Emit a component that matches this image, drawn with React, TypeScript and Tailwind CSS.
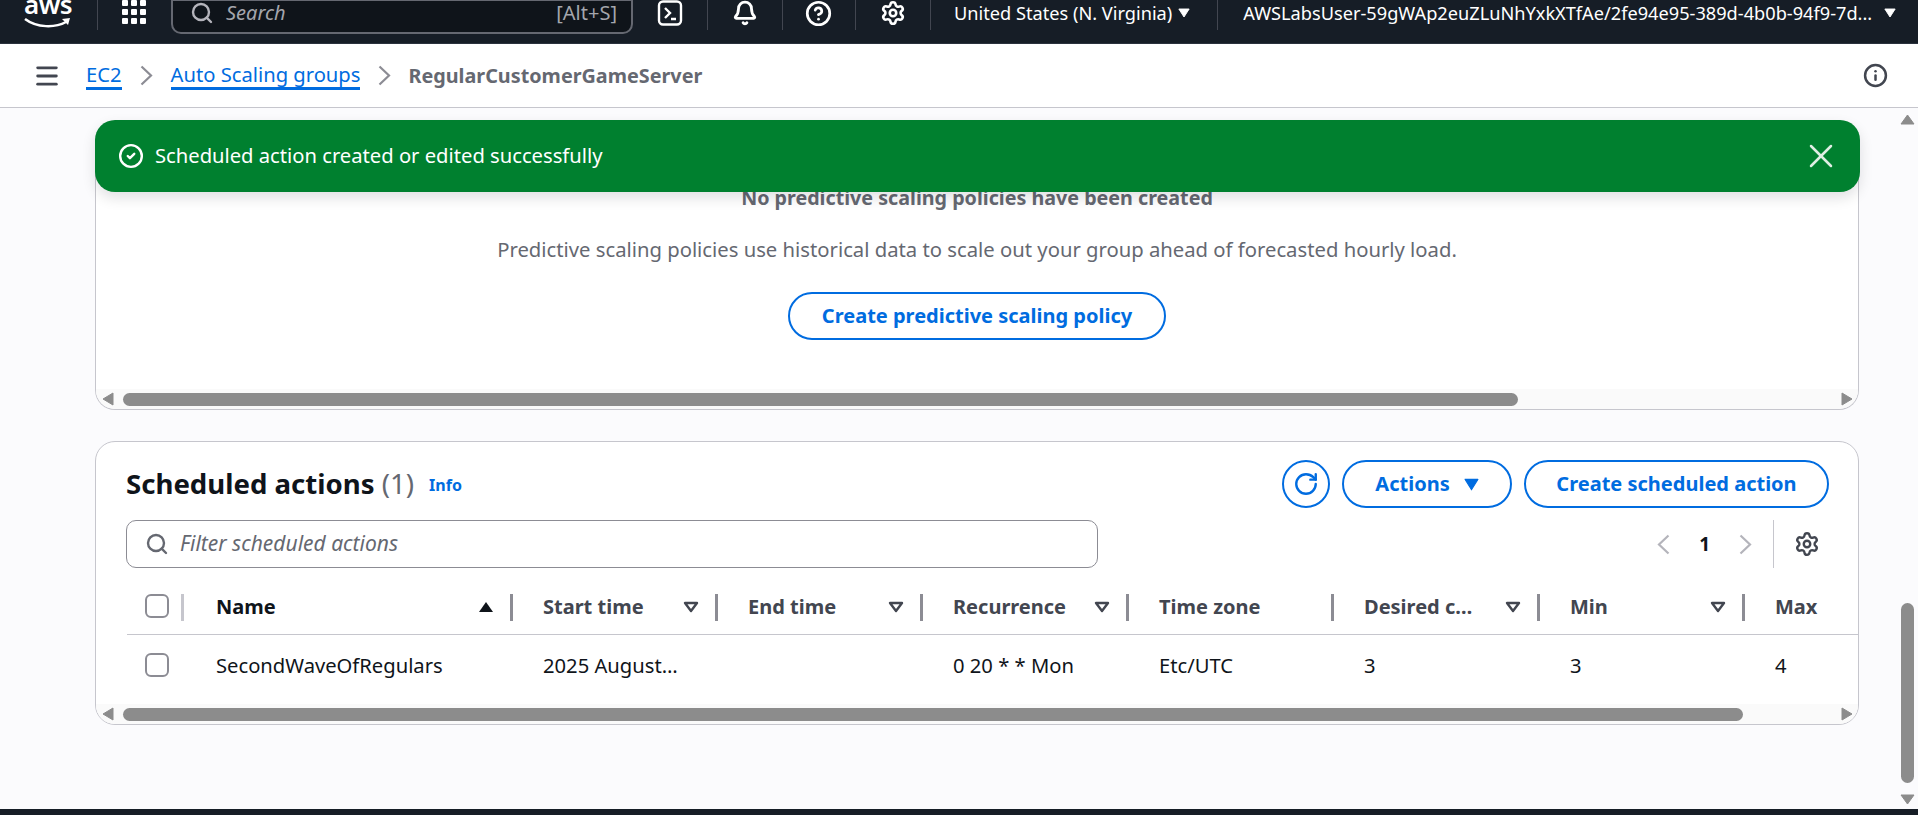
import { CircleCheck, Info, Menu, RotateCw, Search, Settings, Bell, CircleHelp, X } from 'lucide-react';

const font = { fontFamily: '"Noto Sans", sans-serif' };

const Divider = ({ className = '' }: { className?: string }) => (
  <div className={`w-px h-[30px] bg-[#424650] shrink-0 ${className}`} />
);

const Caret = ({ className = '', color = '#ffffff', width = 12, height = 10 }: { className?: string; color?: string; width?: number; height?: number }) => (
  <svg width={width} height={height} viewBox="0 0 14 10" preserveAspectRatio="none" className={className}>
    <path d="M1 1h12L7 9z" fill={color} stroke={color} strokeLinejoin="round" />
  </svg>
);

const ThinChevron = ({ left = false, color = '#8c8c94' }: { left?: boolean; color?: string }) => (
  <svg width="13" height="21" viewBox="0 0 13 21" fill="none" stroke={color} strokeWidth="2.2" className="shrink-0">
    <path d={left ? 'M11.500 1.500L2 10.500l9.500 9' : 'M1.500 1.500l9.500 9-9.500 9'} />
  </svg>
);

const TopBar = () => (
  <header className="h-[44px] shrink-0 bg-[#161d26] border-b border-[#2a323d] overflow-hidden flex items-start text-white">
    <div className="w-[97px] h-[30px] shrink-0 relative">
      <span className="absolute left-[24px] top-[-11px] text-[26px] leading-[30px] font-semibold tracking-[-0.5px]">aws</span>
      <svg width="48" height="12" viewBox="0 0 48 12" className="absolute left-[24px] top-[17px]">
        <path d="M1 2c12 9 30 9 41 3" fill="none" stroke="#fff" strokeWidth="2.5" />
        <path d="M38 2l8-1-2 7z" fill="#fff" />
      </svg>
    </div>
    <Divider />
    <svg width="24" height="24" viewBox="0 0 24 24" className="ml-[24px] shrink-0" fill="#fff">
      {[0, 9, 18].flatMap((y) =>
        [0, 9, 18].map((x) => <rect key={`${x}-${y}`} x={x} y={y} width="6" height="6" rx="1" />),
      )}
    </svg>
    <div className="ml-[25px] w-[462px] h-[35px] mt-[-1px] shrink-0 rounded-b-[10px] border-2 border-[#656871] bg-[#0f141a] flex items-center pl-[17px] pr-[14px] pb-[7px]">
      <Search size={24} strokeWidth={2.4} className="text-[#b4b4bb] shrink-0" />
      <span className="ml-[12px] italic text-[#a4a6ad] text-[20px]">Search</span>
      <span className="ml-auto text-[#a4a6ad] text-[20px]">[Alt+S]</span>
    </div>
    <svg width="26" height="26" viewBox="0 0 26 26" className="ml-[24px] shrink-0" fill="none" stroke="#fff" strokeWidth="2.4">
      <rect x="2" y="1.5" width="22" height="23" rx="4" />
      <path d="M8 8l5 5-5 5M14 19h5" />
    </svg>
    <Divider className="ml-[24px]" />
    <Bell size={26} strokeWidth={2.6} className="ml-[24px] shrink-0" />
    <Divider className="ml-[24px]" />
    <CircleHelp size={27} strokeWidth={2.4} className="ml-[22px] shrink-0" />
    <Divider className="ml-[23px]" />
    <Settings size={26} strokeWidth={2.4} className="ml-[24px] shrink-0" />
    <Divider className="ml-[24px]" />
    <span className="ml-[23px] text-[18.2px] leading-[26px] whitespace-nowrap">United States (N. Virginia)</span>
    <Caret className="ml-[6px] mt-[8px] shrink-0" />
    <Divider className="ml-[27px]" />
    <span className="ml-[25px] w-[632px] text-[18.2px] leading-[26px] whitespace-nowrap overflow-hidden">AWSLabsUser-59gWAp2euZLuNhYxkXTfAe/2fe94e95-389d-4b0b-94f9-7d...</span>
    <Caret className="ml-[9px] mt-[8px] shrink-0" />
  </header>
);

const Breadcrumbs = () => (
  <nav className="h-[64px] shrink-0 bg-white border-b border-[#c6c6cd] flex items-center pl-[33px] pr-[30px] text-[20.2px]">
    <Menu size={28} strokeWidth={2.4} className="text-[#424650] shrink-0" />
    <a className="ml-[25px] text-[#006ce0] border-b-[3px] border-[#006ce0] leading-[26px]">EC2</a>
    <span className="ml-[18px]"><ThinChevron /></span>
    <a className="ml-[18px] text-[#006ce0] border-b-[3px] border-[#006ce0] leading-[26px]">Auto Scaling groups</a>
    <span className="ml-[18px]"><ThinChevron /></span>
    <span className="ml-[17px] font-bold text-[#656871] text-[19.8px]">RegularCustomerGameServer</span>
    <Info size={25} strokeWidth={2.4} className="ml-auto text-[#424650]" />
  </nav>
);

const HScrollbar = ({ thumb }: { thumb: number }) => (
  <div className="h-[20px] bg-[#fafafa] flex items-center pl-[6px] pr-[5px] shrink-0">
    <svg width="12" height="14" viewBox="0 0 12 14" className="shrink-0"><path d="M11 1v12L1 7z" fill="#8c8c8c" stroke="#8c8c8c" strokeLinejoin="round" /></svg>
    <div className="flex-1 h-[13px] ml-[9px] mr-[10px]">
      <div className="h-full rounded-full bg-[#8c8c8c]" style={{ width: thumb }} />
    </div>
    <svg width="12" height="14" viewBox="0 0 12 14" className="shrink-0"><path d="M1 1v12l10-6z" fill="#8c8c8c" stroke="#8c8c8c" strokeLinejoin="round" /></svg>
  </div>
);

const Checkbox = () => <div className="w-[24px] h-[24px] rounded-[6px] border-2 border-[#8c8c94] bg-white" />;

const SortIcon = ({ active = false }: { active?: boolean }) =>
  active ? (
    <svg width="16" height="12" viewBox="0 0 16 12" className="shrink-0"><path d="M8 1l7 10H1z" fill="#0f141a" /></svg>
  ) : (
    <svg width="16" height="12" viewBox="0 0 16 12" className="shrink-0"><path d="M2 2h12l-6 8z" fill="none" stroke="#424650" strokeWidth="2.4" strokeLinejoin="round" /></svg>
  );

const columns = [
  { label: 'Start time', value: '2025 August…', sort: true },
  { label: 'End time', value: '', sort: true },
  { label: 'Recurrence', value: '0 20 * * Mon', sort: true },
  { label: 'Time zone', value: 'Etc/UTC', sort: false },
  { label: 'Desired c…', value: '3', sort: true },
  { label: 'Min', value: '3', sort: true },
];

const gridCols = 'grid grid-cols-[58px_328px_205px_205px_206px_205px_206px_205px_1fr]';

const ScheduledTable = () => (
  <div className="text-[20.2px]">
    <div className={`${gridCols} h-[49px] border-b border-[#c6c6cd] ml-[31px] text-[20px]`}>
      <div className="flex items-start pt-[8px] pl-[18px] pr-[1px] justify-between">
        <Checkbox />
        <div className="w-[3px] h-[27px] bg-[#c6c6cd]" />
      </div>
      <div className="flex items-start">
        <div className="flex-1 h-[41px] flex items-center pl-[31px] pr-[16px] justify-between font-bold text-[#0f141a]">
          <span>Name</span>
          <SortIcon active />
        </div>
        <div className="w-[3px] h-[27px] mt-[8px] bg-[#8c8c94] shrink-0" />
      </div>
      {columns.map((c) => (
        <div key={c.label} className="flex items-start">
          <div className="flex-1 h-[41px] flex items-center pl-[30px] pr-[16px] justify-between font-bold text-[#424650] whitespace-nowrap">
            <span>{c.label}</span>
            {c.sort && <SortIcon />}
          </div>
          <div className="w-[3px] h-[27px] mt-[8px] bg-[#8c8c94] shrink-0" />
        </div>
      ))}
      <div className="h-[41px] flex items-center pl-[30px] font-bold text-[#424650]">Max</div>
    </div>
    <div className={`${gridCols} h-[60px] items-center ml-[31px] text-[#0f141a]`}>
      <div className="pl-[18px]"><Checkbox /></div>
      <div className="pl-[31px]">SecondWaveOfRegulars</div>
      {columns.map((c) => (
        <div key={c.label} className="pl-[30px] whitespace-nowrap">{c.value}</div>
      ))}
      <div className="pl-[30px]">4</div>
    </div>
  </div>
);

const OutlineButton = ({ children, className = '' }: { children: React.ReactNode; className?: string }) => (
  <button className={`h-[48px] rounded-full border-[2.5px] border-[#006ce0] text-[#006ce0] font-bold text-[20px] flex items-center justify-center bg-white ${className}`}>
    {children}
  </button>
);

const Toast = () => (
  <div className="absolute left-[95px] top-[12px] w-[1765px] h-[72px] rounded-[20px] bg-[#00802f] text-white flex items-center pl-[23px] pr-[19px] shadow-[0_6px_14px_rgba(0,7,22,0.12)] z-10">
    <CircleCheck size={26} strokeWidth={2.2} className="shrink-0" />
    <span className="ml-[11px] mb-[2px] text-[20.2px]">Scheduled action created or edited successfully</span>
    <X size={40} strokeWidth={1.5} className="ml-auto text-[#dfeee4]" />
  </div>
);

const MainScrollbar = () => (
  <div className="w-[18px] shrink-0 flex flex-col items-center pr-[3px] pt-[6px] pb-[4px]">
    <svg width="15" height="11" viewBox="0 0 15 11"><path d="M7.500 1l6.500 9H1z" fill="#8c8c8c" stroke="#8c8c8c" strokeLinejoin="round" /></svg>
    <div className="flex-1" />
    <div className="w-[13px] h-[180px] rounded-full bg-[#8c8c8c]" />
    <svg width="15" height="11" viewBox="0 0 15 11" className="mt-[11px]"><path d="M1 1h13l-6.500 9z" fill="#8c8c8c" stroke="#8c8c8c" strokeLinejoin="round" /></svg>
  </div>
);

const App = () => (
  <div className="h-screen w-full flex flex-col overflow-hidden bg-[#fbfbfd] text-[#0f141a]" style={font}>
    <TopBar />
    <Breadcrumbs />
    <main className="flex-1 flex relative min-h-0 overflow-hidden">
      <Toast />
      <div className="flex-1 pl-[95px] pr-[41px] pt-[39px]">
        <section className="h-[263px] rounded-b-[20px] bg-white border border-t-0 border-[#c6c6cd] flex flex-col overflow-hidden">
          <div className="flex-1 flex flex-col items-center pt-[37px]">
            <p className="font-bold text-[#656871] text-[19.7px] leading-[28px]">No predictive scaling policies have been created</p>
            <p className="mt-[23px] text-[#656871] text-[20.25px] leading-[28px]">Predictive scaling policies use historical data to scale out your group ahead of forecasted hourly load.</p>
            <OutlineButton className="mt-[29px] w-[378px]">Create predictive scaling policy</OutlineButton>
          </div>
          <HScrollbar thumb={1395} />
        </section>
        <section className="mt-[31px] h-[284px] rounded-[20px] bg-white border border-[#c6c6cd] flex flex-col overflow-hidden">
          <div className="flex-1 min-h-0">
            <div className="h-[78px] pl-[30px] pr-[29px] flex items-start pt-[18px]">
              <h2 className="font-bold text-[27.6px] leading-[46px] text-[#0f141a]">
                Scheduled actions <span className="font-normal text-[#656871]">(1)</span>
              </h2>
              <a className="ml-[15px] mt-[13px] text-[#006ce0] font-bold text-[16px]">Info</a>
              <div className="ml-auto flex gap-[12px]">
                <OutlineButton className="w-[48px]"><RotateCw size={26} strokeWidth={2.2} /></OutlineButton>
                <OutlineButton className="w-[170px] gap-[14px]">Actions <Caret color="#006ce0" width={15} height={13} className="shrink-0" /></OutlineButton>
                <OutlineButton className="w-[305px]">Create scheduled action</OutlineButton>
              </div>
            </div>
            <div className="h-[66px] pl-[30px] pr-[29px] flex items-start">
              <div className="w-[972px] h-[48px] rounded-[10px] border border-[#8c8c94] flex items-center pl-[18px]">
                <Search size={24} strokeWidth={2.4} className="text-[#656871]" />
                <span className="ml-[11px] italic text-[#656871] text-[21px]">Filter scheduled actions</span>
              </div>
              <div className="ml-auto h-[48px] flex items-center">
                <ThinChevron left color="#b4b4bb" />
                <span className="mx-[29px] font-bold text-[19px] text-[#0f141a]">1</span>
                <ThinChevron color="#b4b4bb" />
                <div className="ml-[21px] w-px h-[48px] bg-[#c6c6cd]" />
                <Settings size={26} strokeWidth={2.2} className="ml-[20px] mr-[9px] text-[#424650]" />
              </div>
            </div>
            <ScheduledTable />
          </div>
          <HScrollbar thumb={1620} />
        </section>
      </div>
      <MainScrollbar />
    </main>
    <div className="h-[6px] shrink-0 bg-[#161d26]" />
  </div>
);

export default App;
